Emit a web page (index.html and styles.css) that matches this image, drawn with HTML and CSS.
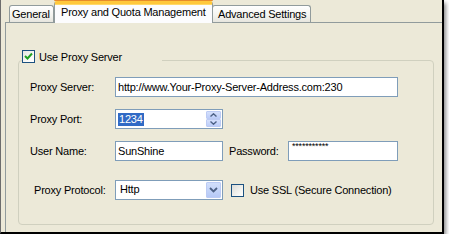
FILE: index.html
```html
<!DOCTYPE html>
<html lang="en">
<head>
  <meta charset="UTF-8">
  <title>Proxy and Quota Management</title>
  <link rel="stylesheet" href="styles.css">
</head>
<body>

  <div class="frame">
    <div class="tabs">
      <div class="tab">General</div>
      <div class="tab active">Proxy and Quota Management</div>
      <div class="tab">Advanced Settings</div>
    </div>

    <div class="panel">
      <div class="group">
        <div class="legend">
          <span class="check checked">
            <svg width="9" height="9" viewBox="0 0 9 9"><path d="M1 4 L3.5 6.5 L8 1.5" fill="none" stroke="#21a121" stroke-width="2"/></svg>
          </span>
          <span>Use Proxy Server</span>
        </div>

        <div class="row first">
          <div class="label">Proxy Server:</div>
          <div class="field wide">http://www.Your-Proxy-Server-Address.com:230</div>
        </div>

        <div class="row">
          <div class="label">Proxy Port:</div>
          <div class="field short spin">
            <span class="selected">1234</span>
            <div class="spin-btns">
              <div class="spin-btn">
                <svg width="7" height="4" viewBox="0 0 7 4"><path d="M0.5 3.5 L3.5 0.8 L6.5 3.5" fill="none" stroke="#4d6185" stroke-width="1.4"/></svg>
              </div>
              <div class="spin-btn">
                <svg width="7" height="4" viewBox="0 0 7 4"><path d="M0.5 0.5 L3.5 3.2 L6.5 0.5" fill="none" stroke="#4d6185" stroke-width="1.4"/></svg>
              </div>
            </div>
          </div>
        </div>

        <div class="row">
          <div class="label">User Name:</div>
          <div class="field short">SunShine</div>
          <div class="label pass-label">Password:</div>
          <div class="field pass">***********</div>
        </div>

        <div class="row last">
          <div class="label indent">Proxy Protocol:</div>
          <div class="field short combo">
            <span>Http</span>
            <div class="drop-btn">
              <svg width="9" height="6" viewBox="0 0 9 6"><path d="M1 1 L4.5 4.5 L8 1" fill="none" stroke="#4d6185" stroke-width="1.8"/></svg>
            </div>
          </div>
          <span class="check ssl"></span>
          <span class="ssl-text">Use SSL (Secure Connection)</span>
        </div>
      </div>
    </div>
  </div>

</body>
</html>
```

FILE: styles.css
```css
body, html {
  margin: 0;
  padding: 0;
  background-color: #fff;
  font-family: "Liberation Sans", Arial, sans-serif;
  font-size: 11px;
  letter-spacing: -0.2px;
  color: #000;
}

.frame {
  width: 441px;
  height: 232px;
  background-color: #ece9d8;
  border-left: 1px solid #6d6d6d;
  border-right: 2px solid #000;
  border-bottom: 2px solid #000;
  box-shadow: 2px 3px 4px rgba(0, 0, 0, 0.45);
  display: flex;
  flex-direction: column;
}

/* tab strip */
.tabs {
  height: 22px;
  display: flex;
  align-items: flex-end;
  padding-left: 8px;
}

.tab {
  height: 17px;
  line-height: 16px;
  padding: 0 2px;
  border: 1px solid #919b9c;
  border-bottom: none;
  border-radius: 3px 3px 0 0;
  background: linear-gradient(#ffffff, #f3f3ef 60%, #e6e5de);
  box-sizing: border-box;
  white-space: nowrap;
  overflow: hidden;
}

.tab:first-child {
  width: 45px;
}

.tab.active {
  width: 159px;
  height: 22px;
  margin-bottom: -1px;
  padding: 0 0 0 6px;
  line-height: 17px;
  border-top: 3px solid #ffc83c;
  box-shadow: inset 0 1px 0 #ffd86a;
  background: #fcfcfe;
  position: relative;
  overflow: visible;
  z-index: 1;
}

.tab.active::before {
  content: "";
  position: absolute;
  left: -1px;
  right: -1px;
  top: -4px;
  height: 1px;
  border-radius: 3px 3px 0 0;
  background: #e68b2c;
}

.tab:last-child {
  width: 99px;
  margin-left: -1px;
  padding-left: 5px;
}

/* panel */
.panel {
  flex: 1;
  margin-left: 4px;
  border-left: 1px solid #919b9c;
  border-top: 1px solid #919b9c;
  padding: 37px 8px 0 12px;
}

.group {
  height: 163px;
  border: 1px solid #d0d0bf;
  border-radius: 4px;
}

.legend {
  width: 140px;
  height: 13px;
  margin: -11px 0 0 3px;
  background-color: #ece9d8;
  display: flex;
  align-items: center;
  gap: 4px;
}

.check {
  width: 11px;
  height: 11px;
  border: 1px solid #1c5180;
  background: linear-gradient(135deg, #dcdcd7, #f6f6f3 70%, #ffffff);
  display: flex;
  align-items: center;
  justify-content: center;
  flex-shrink: 0;
}

.check.checked {
  background: linear-gradient(135deg, #e6e6e0, #fbfbf9 70%, #ffffff);
}

/* form rows */
.row {
  height: 20px;
  margin-top: 12px;
  padding-left: 11px;
  display: flex;
  align-items: center;
}

.row.first {
  margin-top: 14px;
}

.row.last {
  margin-top: 19px;
}

.label {
  width: 85px;
  flex-shrink: 0;
}

.label.indent {
  width: 81px;
  padding-left: 4px;
}

.field {
  height: 20px;
  border: 1px solid #7f9db9;
  background-color: #fff;
  box-sizing: border-box;
  padding-left: 2px;
  display: flex;
  align-items: center;
  white-space: nowrap;
}

.field.wide {
  width: 283px;
}

.field.short {
  width: 108px;
}

.pass-label {
  width: 59px;
  margin-left: 6px;
}

.field.pass {
  width: 110px;
  align-items: flex-start;
  font-size: 9px;
  line-height: 9px;
  padding-left: 3px;
}

.spin {
  position: relative;
}

.selected {
  background-color: #316ac5;
  color: #fff;
  padding: 0 1px;
  line-height: 13px;
}

.spin-btns {
  position: absolute;
  right: 1px;
  top: 1px;
  width: 15px;
  display: flex;
  flex-direction: column;
}

.spin-btn {
  height: 8px;
  box-sizing: border-box;
  border: 1px solid #bccbf4;
  border-radius: 1px;
  background: linear-gradient(#d5e0fc, #bccdf9);
  display: flex;
  align-items: center;
  justify-content: center;
}

.combo {
  position: relative;
  padding-left: 4px;
  align-items: flex-start;
  padding-top: 2px;
}

.drop-btn {
  position: absolute;
  right: 1px;
  top: 1px;
  width: 15px;
  height: 16px;
  box-sizing: border-box;
  border: 1px solid #bccbf4;
  border-radius: 1px;
  background: linear-gradient(#d2dffb, #b6c9f6);
  display: flex;
  align-items: center;
  justify-content: center;
}

.check.ssl {
  margin-left: 8px;
}

.ssl-text {
  margin-left: 6px;
}
```
